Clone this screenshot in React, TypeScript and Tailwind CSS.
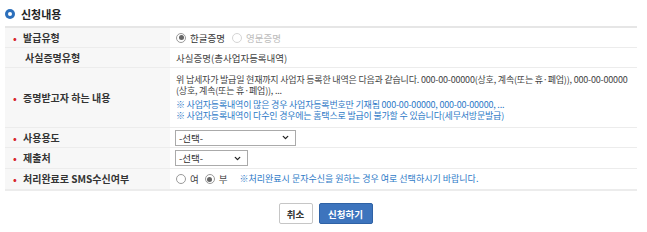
import { ChevronDown } from "lucide-react";

const font = { fontFamily: '"Noto Sans CJK KR", "Noto Sans", sans-serif' };

function Label({ text, required = true }: { text: string; required?: boolean }) {
  return (
    <div className="flex items-center bg-[#f7f7f7] pl-[8px] text-[10px] leading-[12px] font-semibold text-[#333]">
      <span className={`w-[10px] text-[#d8262b] ${required ? "" : "invisible"}`}>•</span>
      <span className={required ? "" : "pl-[2px]"}>{text}</span>
    </div>
  );
}

function Radio({ checked }: { checked: boolean }) {
  return (
    <span className="flex h-[10px] w-[10px] items-center justify-center rounded-full border border-[#9a9a9a] bg-white">
      {checked && <span className="h-[5px] w-[5px] rounded-full bg-[#666]" />}
    </span>
  );
}

function Select({ width }: { width: string }) {
  return (
    <div className={`flex h-[16px] items-center justify-between border border-[#aaa] bg-white pl-[3px] pr-[5px] text-[9.5px] leading-[12px] text-[#333] ${width}`}>
      <span>-선택-</span>
      <ChevronDown size={9} strokeWidth={3.5} className="text-[#222]" />
    </div>
  );
}

export default function App() {
  return (
    <div className="h-[232px] w-[647px] overflow-hidden bg-white" style={font}>
      <div className="mt-[7px] flex h-[14px] items-center gap-[6px] pl-[5px]">
        <span className="flex h-[10px] w-[10px] items-center justify-center rounded-full bg-[#2c6fbb]">
          <span className="h-[4px] w-[4px] rounded-full bg-white" />
        </span>
        <span className="text-[11px] leading-[14px] font-bold text-[#222]">신청내용</span>
      </div>

      <div className="ml-[5px] mt-[5px] w-[632px] border-t-2 border-t-[#e6e6e6] border-b-2 border-b-[#ececec]">
        <div className="grid h-[20px] grid-cols-[165px_1fr] border-b border-[#ececec]">
          <Label text="발급유형" />
          <div className="flex items-center gap-[4px] pl-[6px] text-[9.5px] leading-[12px]">
            <Radio checked />
            <span className="text-[#333]">한글증명</span>
            <span className="ml-[3px] h-[10px] w-[10px] rounded-full border border-[#d5d5d5]" />
            <span className="text-[#bbb]">영문증명</span>
          </div>
        </div>
        <div className="grid h-[20px] grid-cols-[165px_1fr] border-b border-[#ececec]">
          <Label text="사실증명유형" required={false} />
          <div className="flex items-center pl-[6px] text-[9.5px] leading-[12px] text-[#444]">사실증명(총사업자등록내역)</div>
        </div>
        <div className="grid h-[60px] grid-cols-[165px_1fr] border-b border-[#ececec]">
          <Label text="증명받고자 하는 내용" />
          <div className="flex flex-col justify-center pl-[6px] text-[9px] leading-[11px] tracking-[-0.2px] whitespace-nowrap">
            <p className="text-[#444]">
              위 납세자가 발급일 현재까지 사업자 등록한 내역은 다음과 같습니다. 000-00-00000(상호, 계속(또는 휴·폐업)), 000-00-00000
            </p>
            <p className="text-[#444]">(상호, 계속(또는 휴·폐업)), ...</p>
            <p className="mt-[3px] text-[#2e7ac7]">※ 사업자등록내역이 많은 경우 사업자등록번호만 기재됨 000-00-00000, 000-00-00000, ...</p>
            <p className="text-[#2e7ac7]">※ 사업자등록내역이 다수인 경우에는 홈택스로 발급이 불가할 수 있습니다(세무서방문발급)</p>
          </div>
        </div>
        <div className="grid h-[20px] grid-cols-[165px_1fr] border-b border-[#ececec]">
          <Label text="사용용도" />
          <div className="flex items-center pl-[5px]">
            <Select width="w-[121px]" />
          </div>
        </div>
        <div className="grid h-[21px] grid-cols-[165px_1fr] border-b border-[#ececec]">
          <Label text="제출처" />
          <div className="flex items-center pl-[5px]">
            <Select width="w-[73px]" />
          </div>
        </div>
        <div className="grid h-[20px] grid-cols-[165px_1fr]">
          <Label text="처리완료로 SMS수신여부" />
          <div className="flex items-center gap-[4px] pl-[6px] text-[9.5px] leading-[12px] text-[#444]">
            <Radio checked={false} />
            <span>여</span>
            <span className="ml-[2px]">
              <Radio checked />
            </span>
            <span>부</span>
            <span className="ml-[8px] text-[9px] text-[#2e7ac7]">※처리완료시 문자수신을 원하는 경우 여로 선택하시기 바랍니다.</span>
          </div>
        </div>
      </div>

      <div className="mt-[12px] flex justify-center gap-[6px] pl-[4px]">
        <button className="h-[21px] w-[34px] rounded-[2px] border border-[#c6c6c6] bg-white text-[9.5px] leading-[12px] font-bold text-[#333]">
          취소
        </button>
        <button className="h-[21px] w-[54px] rounded-[2px] border border-[#2f62a5] bg-[#3d74bd] text-[9.5px] leading-[12px] font-bold text-white">
          신청하기
        </button>
      </div>
    </div>
  );
}
